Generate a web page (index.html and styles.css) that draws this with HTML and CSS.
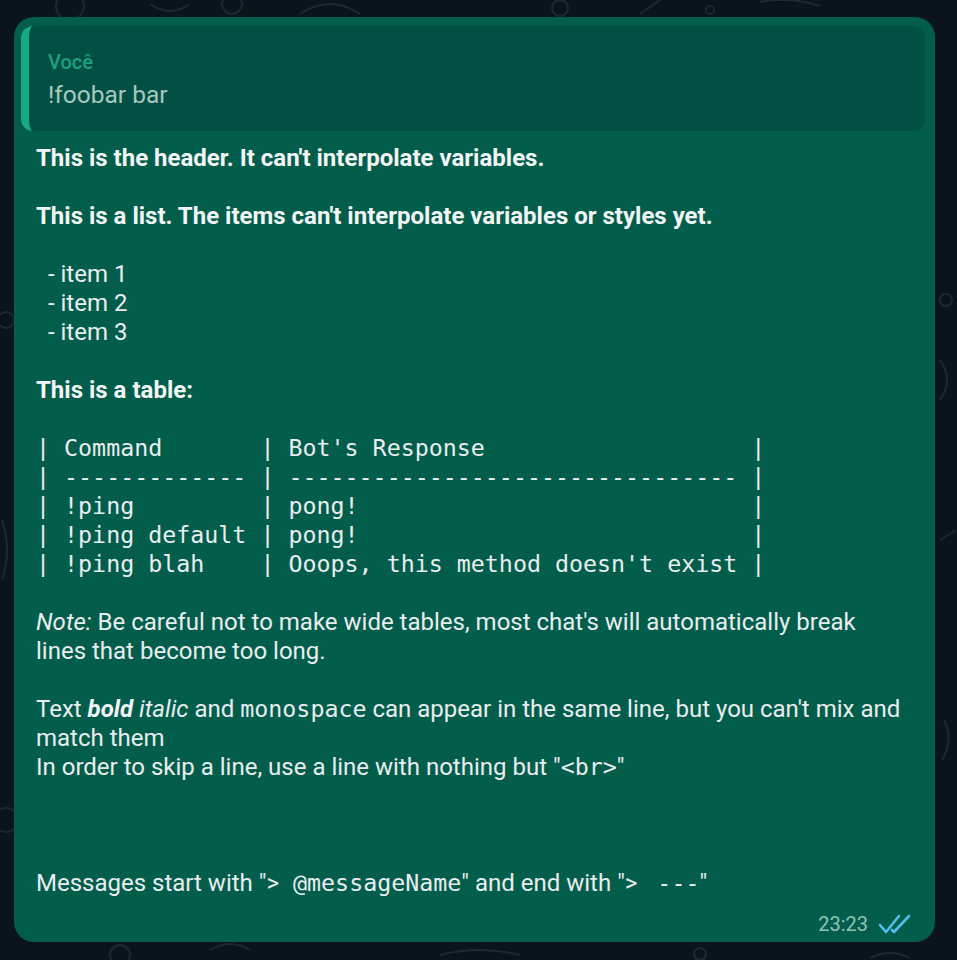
FILE: index.html
```html
<!DOCTYPE html>
<html lang="pt">
<head>
<meta charset="utf-8">
<link rel="stylesheet" href="styles.css">
</head>
<body>
<div class="chat">
  <svg class="doodles" width="957" height="960" viewBox="0 0 957 960" aria-hidden="true">
    <g fill="none" stroke="#1b2a30" stroke-width="2">
      <circle cx="70" cy="6" r="14"/>
      <path d="M150 4 q20 14 40 0"/>
      <circle cx="232" cy="4" r="10"/>
      <path d="M300 14 q30 -20 60 0"/>
      <circle cx="560" cy="8" r="8"/>
      <path d="M640 14 l20 -14"/>
      <circle cx="710" cy="10" r="4"/>
      <path d="M760 2 q30 -6 60 4"/>
      <circle cx="946" cy="300" r="6"/>
      <path d="M940 360 q14 20 0 40"/>
      <circle cx="6" cy="320" r="8"/>
      <path d="M2 520 q10 30 0 60"/>
      <circle cx="6" cy="820" r="12"/>
      <path d="M940 540 l16 -10"/>
      <path d="M944 720 q10 20 -2 40"/>
      <circle cx="120" cy="955" r="10"/>
      <path d="M210 950 q20 -12 40 0"/>
      <path d="M440 955 q40 -10 80 0"/>
      <circle cx="700" cy="954" r="6"/>
      <path d="M870 958 q20 -10 40 0"/>
    </g>
  </svg>
  <div class="bubble">
    <div class="quote">
      <div class="quote-author">Você</div>
      <div class="quote-text">!foobar bar</div>
    </div>
    <div class="body"><b>This is the header. It can't interpolate variables.</b>

<b>This is a list. The items can't interpolate variables or styles yet.</b>

  - item 1
  - item 2
  - item 3

<b>This is a table:</b>

<code>| Command       | Bot's Response                   |
| ------------- | -------------------------------- |
| !ping         | pong!                            |
| !ping default | pong!                            |
| !ping blah    | Ooops, this method doesn't exist |</code>

<i>Note:</i> Be careful not to make wide tables, most chat's will automatically break lines that become too long.

Text <b><i>bold</i></b> <i>italic</i> and <code>monospace</code> can appear in the same line, but you can't mix and match them
In order to skip a line, use a line with nothing but "<code>&lt;br&gt;</code>"



Messages start with "&gt;<code> @messageName</code>" and end with "&gt; <code> ---</code>"</div>
    <div class="meta">
      <span class="time">23:23</span>
      <svg class="ticks" width="34" height="22" viewBox="0 0 34 22" aria-hidden="true">
        <g fill="none" stroke="#53bdeb" stroke-width="2.6" stroke-linecap="round" stroke-linejoin="round">
          <path d="M2 12 L8 19 L21 3"/>
          <path d="M14 17 L16 19 L31 3"/>
        </g>
      </svg>
    </div>
  </div>
</div>
</body>
</html>
```
FILE: styles.css
```css
html, body {
  margin: 0;
  padding: 0;
  background: #0b141a;
}

.chat {
  position: relative;
  width: 957px;
  height: 960px;
  overflow: hidden;
  background: #0b141a;
  padding-top: 17px;
  box-sizing: border-box;
}

.doodles {
  position: absolute;
  left: 0;
  top: 0;
}

.bubble {
  position: relative;
  margin-left: 14px;
  width: 921px;
  height: 925px;
  box-sizing: border-box;
  background: #035d4b;
  border-radius: 20px;
  padding: 9px 10px 0 7px;
  display: flex;
  flex-direction: column;
  font-family: Roboto, "Noto Sans", sans-serif;
  color: #e9edef;
}

.quote {
  background: #025043;
  border-radius: 12px;
  border-left: 8px solid #17a884;
  height: 105px;
  box-sizing: border-box;
  padding: 22px 0 0 19px;
}

.quote-author {
  color: #1f9f7c;
  font-size: 20px;
  font-weight: 500;
  line-height: 28px;
}

.quote-text {
  color: #a7c8bf;
  font-size: 24.5px;
  line-height: 34px;
  margin-top: 2px;
}

.body {
  white-space: pre-wrap;
  font-size: 24px;
  line-height: 29px;
  padding: 13px 20px 0 15px;
  margin: 0;
}

.body b {
  font-weight: 700;
  color: #f2f5f5;
}

.body code {
  font-family: "DejaVu Sans Mono", "Liberation Mono", monospace;
  font-size: 23.3px;
  line-height: 1;
}

.meta {
  display: flex;
  justify-content: flex-end;
  align-items: center;
  gap: 10px;
  margin-top: 14px;
  padding-right: 13px;
}

.time {
  color: #8fc2b4;
  font-size: 20px;
  line-height: 24px;
}

.ticks {
  display: block;
}
```
